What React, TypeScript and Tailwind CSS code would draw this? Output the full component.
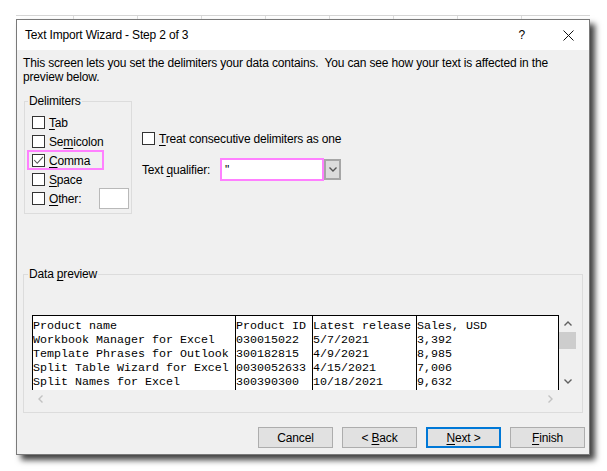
import React from "react";

const U = ({ c }: { c: string }) => (
  <span className="underline decoration-1 underline-offset-[2px]">{c}</span>
);

function Check({ checked }: { checked?: boolean }) {
  return (
    <span className="w-[13px] h-[13px] border border-[#333333] bg-white flex items-center justify-center shrink-0">
      {checked && (
        <svg width="11" height="11" viewBox="0 0 11 11">
          <path d="M1.2 5 L4.2 8.3 L10 1.8" stroke="#555555" strokeWidth="1.1" fill="none" />
        </svg>
      )}
    </span>
  );
}

function Row({
  pre,
  u,
  post,
  checked,
}: {
  pre: string;
  u: string;
  post: string;
  checked?: boolean;
}) {
  return (
    <div className="flex items-center h-[19px] gap-[4px]">
      <Check checked={checked} />
      <span className="whitespace-pre leading-[14px]">
        {pre}
        <U c={u} />
        {post}
      </span>
    </div>
  );
}

function Chevron({ dir, color }: { dir: "up" | "down" | "left" | "right"; color: string }) {
  const paths: Record<string, string> = {
    up: "M0.5 4.5 L4 1 L7.5 4.5",
    down: "M0.5 0.5 L4 4 L7.5 0.5",
    left: "M4.5 0.5 L1 4 L4.5 7.5",
    right: "M0.5 0.5 L4 4 L0.5 7.5",
  };
  const vertical = dir === "up" || dir === "down";
  return (
    <svg
      width={vertical ? 8 : 5}
      height={vertical ? 5 : 8}
      viewBox={vertical ? "0 0 8 5" : "0 0 5 8"}
    >
      <path d={paths[dir]} stroke={color} strokeWidth="1.4" fill="none" />
    </svg>
  );
}

const cols = [
  {
    w: "w-[202px]",
    border: "",
    lines: [
      "Product name",
      "Workbook Manager for Excel",
      "Template Phrases for Outlook",
      "Split Table Wizard for Excel",
      "Split Names for Excel",
    ],
  },
  {
    w: "w-[77px]",
    border: "border-l border-black",
    lines: ["Product ID", "030015022", "300182815", "0030052633", "300390300"],
  },
  {
    w: "w-[104px]",
    border: "border-l border-black",
    lines: ["Latest release", "5/7/2021", "4/9/2021", "4/15/2021", "10/18/2021"],
  },
  {
    w: "flex-1",
    border: "border-l border-black",
    lines: ["Sales, USD", "3,392", "8,985", "7,006", "9,632"],
  },
];

function Btn({ children, primary }: { children: React.ReactNode; primary?: boolean }) {
  return (
    <div
      className={
        "w-[75px] h-[21px] bg-[#e1e1e1] flex items-center justify-center " +
        (primary ? "border-2 border-[#0078d7]" : "border border-[#adadad]")
      }
    >
      <span className="whitespace-pre leading-[14px]">{children}</span>
    </div>
  );
}

export default function App() {
  const gridCells = [0, 1, 2, 3, 4, 5, 6, 7];
  return (
    <div className="w-[607px] h-[471px] bg-white overflow-hidden text-[12px] tracking-[-0.17px] text-black font-['Liberation_Sans',Arial,sans-serif]">
      {/* sheet grid behind the dialog */}
      <div className="mt-[15px] ml-[16px] w-[574px] h-[4px] border-t border-[#d6d6d6] flex">
        <div className="w-[57px] h-full" />
        {gridCells.map((i) => (
          <div key={i} className="w-[64px] h-full border-l border-[#dadada]" />
        ))}
      </div>

      {/* dialog */}
      <div className="ml-[16px] w-[574px] h-[436px] border border-[#7a7a7a] flex flex-col shadow-[5px_5px_6px_rgba(0,0,0,0.75)]">
        {/* title bar */}
        <div className="h-[30px] bg-white flex items-center shrink-0">
          <span className="pl-[8px] leading-[14px]">Text Import Wizard - Step 2 of 3</span>
          <span className="ml-auto leading-[14px]">?</span>
          <span className="ml-[38px] mr-[15px] flex items-center">
            <svg width="11" height="11" viewBox="0 0 11 11">
              <path d="M0.5 0.5 L10.5 10.5 M10.5 0.5 L0.5 10.5" stroke="#111111" strokeWidth="1" fill="none" />
            </svg>
          </span>
        </div>

        {/* body */}
        <div className="flex-1 bg-[#f0f0f0] flex flex-col">
          <p className="pl-[6px] pt-[6px] leading-[14px] whitespace-nowrap">
            This screen lets you set the delimiters your data contains.&nbsp; You can see how your text is affected in the
            <br />
            preview below.
          </p>

          <div className="mt-[10px] h-[120px] pl-[7px] flex items-start">
            <fieldset className="w-[108px] border border-[#dcdcdc] px-0 pb-[5px] m-0">
              <legend className="ml-[3px] px-[1px] leading-[14px]">Delimiters</legend>
              <div className="pt-[5px] pl-[7px]">
                <Row pre="" u="T" post="ab" />
                <Row pre="Se" u="m" post="icolon" />
                <div className="relative">
                  <Row pre="" u="C" post="omma" checked />
                  <span className="absolute left-[-5px] top-[-1px] w-[77px] h-[20px] border-2 border-[#ff80ff]" />
                </div>
                <Row pre="" u="S" post="pace" />
                <div className="flex items-center h-[19px] gap-[4px]">
                  <Check />
                  <span className="w-[46px] leading-[14px]">
                    <U c="O" />
                    ther:
                  </span>
                  <span className="w-[30px] h-[21px] bg-white border border-[#b9b9b9]" />
                </div>
              </div>
            </fieldset>

            <div className="ml-[10px] pt-[38px] flex flex-col">
              <div className="flex items-center h-[13px] gap-[4px]">
                <Check />
                <span className="leading-[14px]">
                  <U c="T" />
                  reat consecutive delimiters as one
                </span>
              </div>
              <div className="mt-[13px] flex items-center h-[23px]">
                <span className="w-[78px] leading-[14px] whitespace-pre">
                  Text <U c="q" />
                  ualifier:
                </span>
                <span className="w-[104px] h-[23px] border-2 border-[#ff80ff] bg-white pl-[3px] leading-[16px] flex items-center">
                  "
                </span>
                <span className="w-[17px] h-[21px] border-2 border-[#a6a6a6] bg-[#dcdcdc] flex items-center justify-center">
                  <Chevron dir="down" color="#555555" />
                </span>
              </div>
            </div>
          </div>

          <div className="mt-[53px] pl-[6px]">
            <fieldset className="w-[560px] border border-[#dcdcdc] px-0 pb-[5px] m-0">
              <legend className="ml-[4px] px-[1px] leading-[14px] whitespace-pre">
                Data <U c="p" />
                review
              </legend>
              <div className="pt-[34px] pl-[8px]">
                <div className="w-[544px] flex">
                  <div className="w-[527px] h-[75px] bg-white border-t border-l border-r border-black flex font-['Liberation_Mono','Courier_New',monospace] text-[11.67px] tracking-normal leading-[14px] whitespace-pre">
                    {cols.map((c, i) => (
                      <div key={i} className={c.w + " h-full pt-[3px] " + c.border}>
                        {c.lines.map((l, j) => (
                          <div key={j} className="h-[14px]">
                            {l}
                          </div>
                        ))}
                      </div>
                    ))}
                  </div>
                  <div className="w-[17px] h-[75px] flex flex-col">
                    <div className="h-[17px] flex items-center justify-center">
                      <Chevron dir="up" color="#606060" />
                    </div>
                    <div className="h-[17px] bg-[#cdcdcd]" />
                    <div className="flex-1" />
                    <div className="h-[17px] flex items-center justify-center">
                      <Chevron dir="down" color="#606060" />
                    </div>
                  </div>
                </div>
                <div className="w-[527px] h-[17px] flex items-center justify-between">
                  <div className="w-[17px] h-[17px] flex items-center justify-center">
                    <Chevron dir="left" color="#c2c2c2" />
                  </div>
                  <div className="w-[17px] h-[17px] flex items-center justify-center">
                    <Chevron dir="right" color="#c2c2c2" />
                  </div>
                </div>
              </div>
            </fieldset>
          </div>

          <div className="mt-[14px] pr-[4px] flex justify-end gap-[9px]">
            <Btn>Cancel</Btn>
            <Btn>
              {"< "}
              <U c="B" />
              ack
            </Btn>
            <Btn primary>
              <U c="N" />
              {"ext >"}
            </Btn>
            <Btn>
              <U c="F" />
              inish
            </Btn>
          </div>
        </div>
      </div>
    </div>
  );
}
